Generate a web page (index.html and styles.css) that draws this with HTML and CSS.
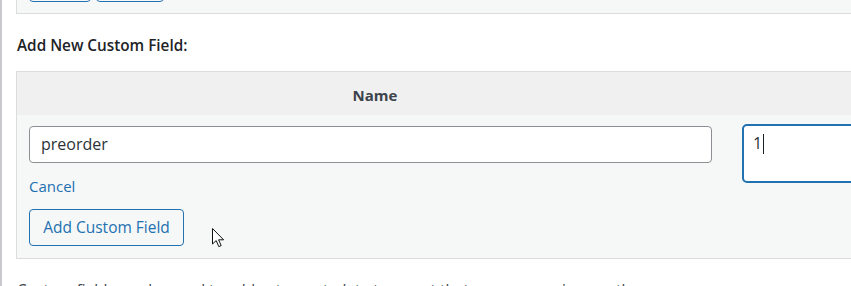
FILE: index.html
```html
<!DOCTYPE html>
<html>
<head>
<meta charset="utf-8">
<link rel="stylesheet" href="styles.css">
</head>
<body>
<div class="page">
  <div class="prev-box">
    <span class="prev-btn b1"></span>
    <span class="prev-btn b2"></span>
  </div>
  <p class="section-title">Add New Custom Field:</p>
  <div class="meta-box">
    <div class="head">
      <div class="th th-name">Name</div>
      <div class="th th-value">Value</div>
    </div>
    <div class="body">
      <div class="cell cell-name">
        <div class="input">preorder</div>
        <a class="cancel" href="#">Cancel</a>
        <span class="add-btn">Add Custom Field</span>
      </div>
      <div class="cell cell-value">
        <div class="textarea"><span class="val">1</span><span class="caret"></span></div>
      </div>
    </div>
    <svg class="cursor" width="13" height="20" viewBox="0 0 13 20" xmlns="http://www.w3.org/2000/svg">
      <path d="M0.5 0.5 L0.5 16 L4.2 12.6 L6.8 18.6 L9.2 17.6 L6.6 11.8 L11.6 11.8 Z" fill="#fff" stroke="#111" stroke-width="1" stroke-linejoin="round"/>
    </svg>
  </div>
  <p class="desc">Custom fields can be used to add extra metadata to a post that you can use in your theme.</p>
</div>
</body>
</html>
```
FILE: styles.css
```css
html, body {
  margin: 0;
  padding: 0;
  background: #fff;
  overflow: hidden;
}
body {
  width: 851px;
  height: 286px;
  font-family: "Open Sans", "Noto Sans", sans-serif;
  color: #3c434a;
}
.page {
  display: flow-root;
  border-left: 2px solid #c8c9cc;
  padding-left: 14px;
  height: 286px;
  box-sizing: border-box;
}
.prev-box {
  margin-top: -30px;
  height: 44px;
  box-sizing: border-box;
  border: 1px solid #dcdcde;
  border-right: none;
  background: #f6f7f7;
  display: flex;
  align-items: flex-end;
  gap: 5px;
  padding: 0 0 11px 12px;
  width: 900px;
}
.prev-btn {
  display: block;
  height: 30px;
  border: 1px solid #2271b1;
  border-radius: 4px;
  box-sizing: border-box;
}
.b1 { width: 62px; }
.b2 { width: 68px; }
.section-title {
  margin: 0;
  padding: 21px 0 0 1px;
  height: 35px;
  font-size: 15.3px;
  font-weight: 600;
  color: #1d2327;
  line-height: 20px;
}
.meta-box {
  position: relative;
  margin-top: 1px;
  width: 1300px;
  border: 1px solid #dcdcde;
  border-right: none;
  background: #f6f7f7;
}
.head {
  display: grid;
  grid-template-columns: 716px 1fr;
  background: #f0f0f1;
  height: 43px;
}
.th {
  font-weight: 700;
  font-size: 15px;
  color: #3c434a;
  text-align: center;
  line-height: 47px;
}
.body {
  display: grid;
  grid-template-columns: 716px 1fr;
  padding-top: 11px;
  height: 132px;
}
.cell-name {
  padding-left: 12px;
  display: flex;
  flex-direction: column;
  align-items: flex-start;
}
.input {
  width: 683px;
  height: 37px;
  box-sizing: border-box;
  border: 1px solid #8c8f94;
  border-radius: 4px;
  background: #fff;
  font-size: 16px;
  color: #2c3338;
  line-height: 35px;
  padding-left: 11px;
}
.cancel {
  margin-top: 13px;
  font-size: 15px;
  line-height: 20px;
  color: #2271b1;
  text-decoration: none;
}
.add-btn {
  margin-top: 13px;
  width: 155px;
  height: 37px;
  box-sizing: border-box;
  border: 1px solid #2271b1;
  border-radius: 4px;
  color: #2271b1;
  background: #f6f7f7;
  font-size: 15.5px;
  line-height: 35px;
  text-align: center;
}
.cell-value {
  padding-left: 9px;
}
.textarea {
  margin-top: -2px;
  height: 59px;
  width: 200px;
  box-sizing: border-box;
  border: 2px solid #2271b1;
  border-radius: 5px;
  background: #fff;
  padding: 6px 0 0 9px;
  font-size: 16px;
  color: #2c3338;
  line-height: 22px;
  display: flex;
  align-items: flex-start;
}
.caret {
  display: inline-block;
  width: 1px;
  height: 20px;
  margin-top: 2px;
  margin-left: 1px;
  background: #1d2327;
}
.cursor {
  position: absolute;
  left: 195px;
  top: 156px;
}
.desc {
  margin: 0;
  padding: 22px 0 0 1px;
  font-size: 15.4px;
  line-height: 20px;
  color: #3c434a;
  white-space: nowrap;
}
```
